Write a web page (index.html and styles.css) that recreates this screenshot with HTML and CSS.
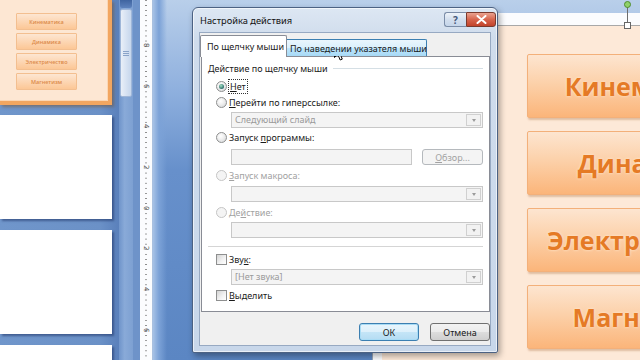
FILE: index.html
```html
<!DOCTYPE html>
<html lang="ru">
<head>
<meta charset="utf-8">
<title>Настройка действия</title>
<link rel="stylesheet" href="styles.css">
</head>
<body>
<div class="app">
  <aside class="thumbs">
    <div class="thumb sel">
      <div class="mini">
        <div class="mini-btn">Кинематика</div>
        <div class="mini-btn">Динамика</div>
        <div class="mini-btn">Электричество</div>
        <div class="mini-btn">Магнетизм</div>
      </div>
    </div>
    <div class="thumb"></div>
    <div class="thumb"></div>
    <div class="thumb"></div>
  </aside>
  <div class="vscroll">
    <div class="vs-arrow"></div>
    <div class="vs-thumb"><span class="grip"></span></div>
  </div>
  <div class="gutter"></div>
  <div class="ruler">
    <span class="rn">8</span><span class="rn">6</span><span class="rn">4</span><span class="rn">2</span><span class="rn">0</span><span class="rn">2</span><span class="rn">4</span><span class="rn">6</span>
  </div>
  <main class="workspace">
    <div class="slide">
      <div class="shape">
        <span class="rot-line"></span><span class="rot-handle"></span><span class="sq-handle"></span>
        <div class="big-btn">Кинематика</div>
        <div class="big-btn">Динамика</div>
        <div class="big-btn">Электричество</div>
        <div class="big-btn">Магнетизм</div>
      </div>
    </div>
  </main>
</div>

<div class="dialog">
  <div class="titlebar">
    <span class="title">Настройка действия</span>
    <div class="caption-btns">
      <span class="cb help">?</span>
      <span class="cb close"><svg width="11" height="9" viewBox="0 0 11 9"><path d="M1.5 1 L9.5 8 M9.5 1 L1.5 8" stroke="#fff" stroke-width="2" stroke-linecap="round"/></svg></span>
    </div>
  </div>
  <div class="client">
    <div class="tabs">
      <div class="tab active">По щелчку мыши</div>
      <div class="tab hover">По наведении указателя мыши</div>
    </div>
    <div class="panel">
      <div class="group-head"><span>Действие по щелчку мыши</span><i class="hline"></i></div>
      <div class="opt r1"><span class="radio on"></span><span class="lbl focus"><u>Н</u>ет</span></div>
      <div class="opt r2"><span class="radio"></span><span class="lbl"><u>П</u>ерейти по гиперссылке:</span></div>
      <div class="combo c1"><span class="val">Следующий слайд</span><span class="arr"></span></div>
      <div class="opt r3"><span class="radio"></span><span class="lbl">Запуск <u>п</u>рограммы:</span></div>
      <div class="field-row">
        <span class="textbox"></span>
        <span class="browse"><u>О</u>бзор...</span>
      </div>
      <div class="opt r4 disabled"><span class="radio"></span><span class="lbl"><u>З</u>апуск макроса:</span></div>
      <div class="combo c3"><span class="val"></span><span class="arr"></span></div>
      <div class="opt r5 disabled"><span class="radio"></span><span class="lbl">Де<u>й</u>ствие:</span></div>
      <div class="combo c4"><span class="val"></span><span class="arr"></span></div>
      <div class="sep"></div>
      <div class="opt r6"><span class="check"></span><span class="lbl">Зву<u>к</u>:</span></div>
      <div class="combo c5"><span class="val">[Нет звука]</span><span class="arr"></span></div>
      <div class="opt r7"><span class="check"></span><span class="lbl"><u>В</u>ыделить</span></div>
    </div>
    <div class="actions">
      <span class="btn default">ОК</span>
      <span class="btn">Отмена</span>
    </div>
  </div>
</div>

<svg class="cursor" width="12" height="18" viewBox="0 0 12 18"><path d="M0.5 0.5 L0.5 14.5 L3.8 11.4 L6.2 17 L8.3 16.1 L5.9 10.6 L10.3 10.6 Z" fill="#fff" stroke="#000" stroke-width="1" stroke-linejoin="round"/></svg>
</body>
</html>
```
FILE: styles.css
```css
* { box-sizing: border-box; margin: 0; padding: 0; }
html, body { width: 640px; height: 360px; overflow: hidden; }
body { position: relative; background: #5e88c4; font-family: "Noto Sans", "Open Sans", sans-serif; }

.app { display: flex; height: 360px; }

/* thumbnails pane */
.thumbs {
  width: 119px; flex: 0 0 119px;
  background: linear-gradient(to right, #7096cb 0, #6b91c7 100px, #5a80bb 119px);
  display: flex; flex-direction: column; gap: 11px; overflow: hidden;
}
.thumb { flex: 0 0 104px; width: 112px; background: #fff; box-shadow: 2px 2px 2px rgba(30, 50, 100, .55); }
.thumb.sel { flex-basis: 105px; margin-bottom: -1px; background: #f2a660; padding: 0 4px 4px 0; box-shadow: 2px 2px 3px rgba(120, 70, 20, .45); }
.mini {
  height: 100%; background: #fde7d3; border-right: 1px solid #fbd7b5; border-bottom: 1px solid #fbd7b5;
  padding: 13px 0 0 16px; display: flex; flex-direction: column; gap: 3px;
}
.mini-btn {
  width: 61px; height: 17px; border: 1px solid #f3bf90; border-radius: 1px;
  background: linear-gradient(#fde6d2, #fcc796);
  color: #dc8a48; font-family: "Open Sans", sans-serif; font-size: 5.5px; font-weight: 600;
  display: flex; align-items: center; justify-content: center;
}

/* scrollbar */
.vscroll { width: 14px; flex: 0 0 14px; background: linear-gradient(to right, #6f94ca, #89aad8 40%, #7da0d2); display: flex; flex-direction: column; padding: 0 1px; }
.vs-arrow { height: 8px; background: linear-gradient(#3f64a0, #5d82bd); border-radius: 0 0 2px 2px; }
.vs-thumb {
  height: 88px; margin-top: 1px; border: 1px solid #9fb6d8; border-radius: 2px;
  background: linear-gradient(to right, #e9eff8, #d4e0f1 60%, #c6d6ec);
  display: flex; align-items: center; justify-content: center;
}
.grip { width: 6px; height: 5px; background: repeating-linear-gradient(#8aa3c8 0 1px, transparent 1px 2px); }
.gutter { width: 7px; flex: 0 0 7px; background: #6e93c9; }

/* ruler */
.ruler {
  width: 13px; flex: 0 0 13px; background-color: #fbfcfe;
  border-right: 1px solid #a9c0df;
  background-image: linear-gradient(#8a8a8a 0 1px, transparent 1px);
  background-size: 2px 5.08px; background-repeat: repeat-y; background-position: 5px 0;
  display: flex; flex-direction: column; padding-top: 25px;
}
.rn {
  height: 40.7px; display: flex; align-items: center; justify-content: center;
  font-family: "DejaVu Sans", sans-serif; font-size: 7px; color: #555;
  transform: rotate(90deg);
}

/* workspace & slide */
.workspace {
  flex: 1; display: flex; padding: 13px 0 0 219px;
  background: linear-gradient(to right, #a7c2e6 0, #7ca2d7 6px, transparent 14px),
              linear-gradient(#b9cfea 0, #8fb0de 90px, #6790cb 170px, #5b86c3 360px);
}
.slide { flex: 1; background: #fbfcfe; border-left: 1px solid #9aa6b6; padding: 12px 0 0 9px; display: flex; }
.shape {
  flex: 1; position: relative; background: #fde9d8; border-top: 1px solid #a8a8a8;
  padding: 28px 0 0 145px; display: flex; flex-direction: column; gap: 13px;
}
.big-btn {
  flex: 0 0 64px; width: 240px; border: 1px solid #f3b07a; border-radius: 2px;
  background: linear-gradient(#fde5d0 0%, #fcd1aa 45%, #fbb57a 100%);
  box-shadow: 1px 2px 2px rgba(170, 110, 60, .35);
  display: flex; align-items: center; justify-content: center;
  font-family: "Open Sans", sans-serif; font-weight: 700; font-size: 25px; color: #e57a25;
  text-shadow: 0 0 3px rgba(255, 240, 220, .9); white-space: nowrap; overflow: hidden;
}
.rot-line { position: absolute; left: 245px; top: -20px; width: 1px; height: 20px; background: #6d6d6d; }
.rot-handle { position: absolute; left: 242px; top: -25px; width: 7px; height: 7px; border-radius: 50%; background: #8fd16a; border: 1px solid #4f8c2e; }
.sq-handle { position: absolute; left: 242px; top: -4px; width: 7px; height: 7px; background: #fff; border: 1px solid #666; }

/* dialog */
.dialog {
  position: absolute; left: 192px; top: 7px; width: 306px; height: 346px;
  border: 1px solid #4c6283; border-radius: 6px 6px 2px 2px;
  background: linear-gradient(#dde7f3 0, #cfdcec 30px, #c8d7ea 100%);
  box-shadow: inset 0 0 0 1px rgba(255, 255, 255, .6), 2px 3px 6px rgba(0, 0, 0, .35);
  display: flex; flex-direction: column;
  font-family: "Noto Sans", sans-serif; font-size: 9px; color: #1a1a1a;
}
.titlebar { height: 24px; flex: 0 0 24px; display: flex; align-items: flex-start; justify-content: space-between; padding: 0 1px 0 7px; }
.title { font-size: 9.3px; line-height: 25px; color: #111; }
.caption-btns { display: flex; margin-top: 4px; }
.cb { height: 15px; display: flex; align-items: center; justify-content: center; border: 1px solid #7b8da8; }
.help { width: 22px; border-radius: 3px 0 0 3px; border-right: 0; background: linear-gradient(#eef3f9, #d3dfee 50%, #c5d5ea); color: #45577a; font-weight: 700; font-size: 10px; }
.close { width: 30px; border-radius: 0 3px 3px 0; border-color: #7a3a2e; background: linear-gradient(#eaa390, #d7654d 50%, #c2432b); }

.client {
  flex: 1; margin: 0 6px 6px 6px; background: #f0f0f0;
  border: 1px solid #97a9c2; padding: 2px 0 0 0; display: flex; flex-direction: column;
}
.tabs { display: flex; align-items: flex-end; height: 21px; position: relative; z-index: 1; }
.tab { display: flex; align-items: center; white-space: nowrap; }
.tab.active { height: 22px; margin-bottom: -1px; width: 87px; background: #fff; border: 1px solid #898c95; border-bottom: 0; padding-left: 6px; border-radius: 2px 2px 0 0; }
.tab.hover { height: 17px; width: 140px; background: linear-gradient(#eaf6fd, #d9f0fc 50%, #bee6fd 51%, #a7d9f5); border: 1px solid #3c7fb1; border-bottom: 0; border-left: 0; padding-left: 3px; border-radius: 0 2px 0 0; }

.panel { height: 256px; margin-left: 1px; background: #fff; border: 1px solid #898c95; display: flex; flex-direction: column; padding-top: 5px; }
.group-head { display: flex; align-items: center; height: 12px; margin: 0 6px; }
.hline { flex: 1; height: 1px; background: #d5dfe5; margin-left: 5px; }
.opt { display: flex; align-items: center; height: 13px; margin-left: 14px; }
.lbl { margin-left: 2px; white-space: nowrap; line-height: 13px; }
.lbl u { text-decoration-thickness: 1px; text-underline-offset: 1px; }
.focus { outline: 1px dotted #333; outline-offset: 0; padding: 0 1px; }
.disabled .lbl { color: #a2a2a2; }

.radio { width: 11px; height: 11px; border-radius: 50%; border: 1px solid #8e8f8f; background: radial-gradient(circle at 40% 35%, #fff 0, #f0f0f0 40%, #cfd2d4 100%); display: flex; align-items: center; justify-content: center; }
.radio.on::after { content: ""; width: 5px; height: 5px; border-radius: 50%; background: radial-gradient(circle at 40% 35%, #a4e0c4, #2c6e6a 70%, #1d4a55); }
.disabled .radio { border-color: #c5c5c5; background: #f4f4f4; }
.check { width: 11px; height: 11px; border: 1px solid #8e8f8f; background: linear-gradient(135deg, #d4d4d4, #f3f3f3 60%, #fff); }

.r1 { margin-top: 6px; }
.r2 { margin-top: 3px; }
.combo { display: flex; height: 16px; margin: 3px 6px 0 29px; border: 1px solid #c8c8c8; background: #f4f4f4; }
.combo .val { flex: 1; color: #9a9a9a; padding-left: 3px; line-height: 14px; white-space: nowrap; }
.combo .arr { width: 15px; margin: 1px; border: 1px solid #d0d0d0; background: #f2f2f2; display: flex; align-items: center; justify-content: center; }
.combo .arr::after { content: ""; border-left: 2.5px solid transparent; border-right: 2.5px solid transparent; border-top: 3px solid #9b9b9b; }
.r3 { margin-top: 3px; }
.field-row { display: flex; gap: 10px; height: 16px; margin: 5px 6px 0 29px; }
.textbox { flex: 1; border: 1px solid #c8c8c8; background: #f4f4f4; }
.browse { width: 61px; border: 1px solid #b5b9bd; border-radius: 3px; background: #f4f4f4; color: #a2a2a2; display: flex; align-items: center; justify-content: center; }
.r4 { margin-top: 4px; }
.c3 { margin-top: 4px; }
.r5 { margin-top: 4px; }
.c4 { margin-top: 3px; }
.sep { height: 1px; margin: 8px 6px 0 6px; background: #d5d5d5; }
.r6 { margin-top: 6px; }
.c5 { margin-top: 3px; }
.r7 { margin-top: 4px; }

.actions { display: flex; justify-content: flex-end; gap: 11px; margin-top: 11px; }
.btn { width: 60px; height: 18px; border: 1px solid #707070; border-radius: 3px; background: linear-gradient(#f2f2f2, #ebebeb 50%, #dddddd 51%, #cfcfcf); display: flex; align-items: center; justify-content: center; }
.btn.default { border-color: #3c7fb1; background: linear-gradient(#e9f5fc, #dcf0fb 50%, #c4e5f7 51%, #b4dcf3); box-shadow: inset 0 0 0 1px #a9dcf5; }

.cursor { position: absolute; left: 334px; top: 43px; }
```
